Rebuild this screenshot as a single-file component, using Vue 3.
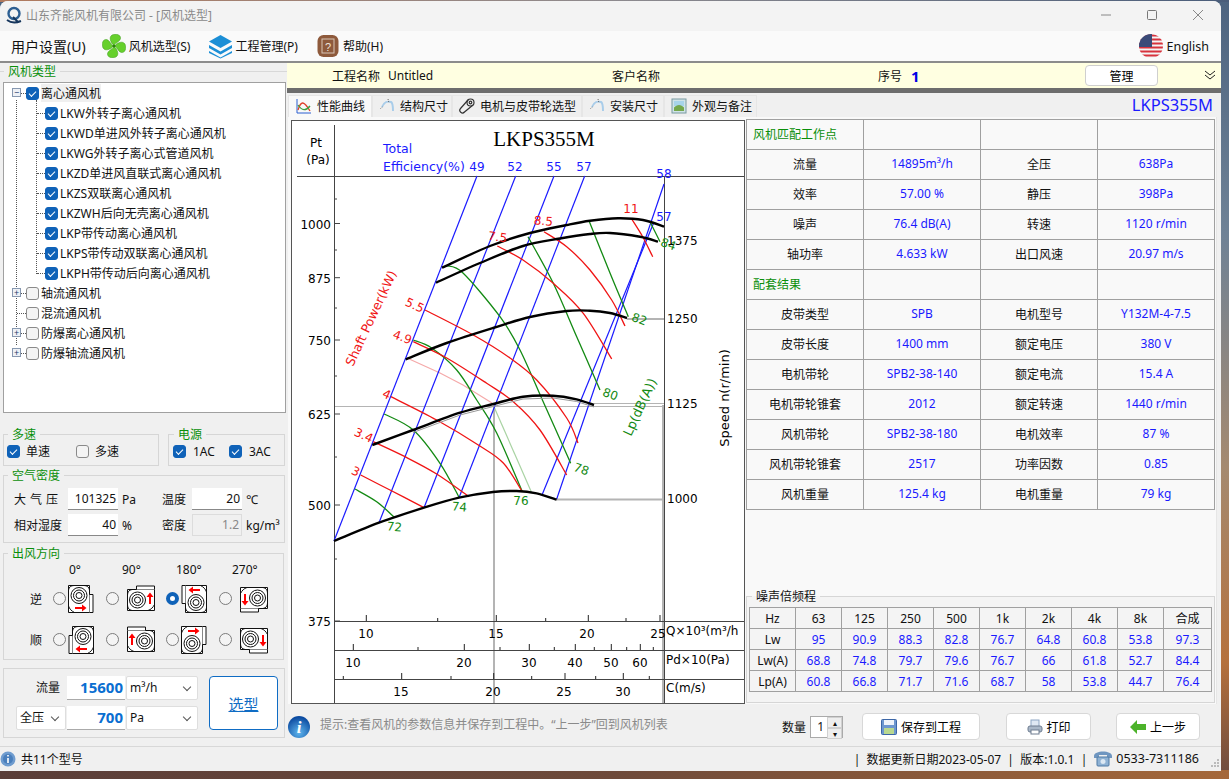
<script setup>
const treeChildren = [
  'LKW外转子离心通风机', 'LKWD单进风外转子离心通风机', 'LKWG外转子离心式管道风机',
  'LKZD单进风直联式离心通风机', 'LKZS双联离心通风机', 'LKZWH后向无壳离心通风机',
  'LKP带传动离心通风机', 'LKPS带传动双联离心通风机', 'LKPH带传动后向离心通风机',
]
const treeRoots = [
  { name: '轴流通风机', expand: true },
  { name: '混流通风机', expand: false },
  { name: '防爆离心通风机', expand: true },
  { name: '防爆轴流通风机', expand: true },
]

const angles = ['0°', '90°', '180°', '270°']
const dirRows = [
  { label: '逆', mirror: 1, selected: 2 },
  { label: '顺', mirror: -1, selected: -1 },
]
const fanTransform = (mirror, i) => `translate(14 14) scale(${mirror} 1) rotate(${-90 * i}) translate(-14 -14)`
// the outlet stub makes the icon off-centre, so the space after the radio differs per cell
const fanGap = (mirror, i) => {
  if (i % 2) return 'gap8'
  return (mirror === 1) === (i === 0) ? 'gap0' : 'gap2'
}

const tabs = [
  { name: '性能曲线', icon: 'curve', w: 84 },
  { name: '结构尺寸', icon: 'size', w: 80 },
  { name: '电机与皮带轮选型', icon: 'pin', w: 130 },
  { name: '安装尺寸', icon: 'size', w: 82 },
  { name: '外观与备注', icon: 'pic', w: 93 },
]

const specRows = [
  { head: '风机匹配工作点' },
  { a: '流量', b: '14895m³/h', c: '全压', d: '638Pa' },
  { a: '效率', b: '57.00 %', c: '静压', d: '398Pa' },
  { a: '噪声', b: '76.4 dB(A)', c: '转速', d: '1120 r/min' },
  { a: '轴功率', b: '4.633 kW', c: '出口风速', d: '20.97 m/s' },
  { head: '配套结果' },
  { a: '皮带类型', b: 'SPB', c: '电机型号', d: 'Y132M-4-7.5' },
  { a: '皮带长度', b: '1400 mm', c: '额定电压', d: '380 V' },
  { a: '电机带轮', b: 'SPB2-38-140', c: '额定电流', d: '15.4 A' },
  { a: '电机带轮锥套', b: '2012', c: '额定转速', d: '1440 r/min' },
  { a: '风机带轮', b: 'SPB2-38-180', c: '电机效率', d: '87 %' },
  { a: '风机带轮锥套', b: '2517', c: '功率因数', d: '0.85' },
  { a: '风机重量', b: '125.4 kg', c: '电机重量', d: '79 kg' },
]

const noiseHead = ['Hz', '63', '125', '250', '500', '1k', '2k', '4k', '8k', '合成']
const noiseRows = [
  ['Lw', '95', '90.9', '88.3', '82.8', '76.7', '64.8', '60.8', '53.8', '97.3'],
  ['Lw(A)', '68.8', '74.8', '79.7', '79.6', '76.7', '66', '61.8', '52.7', '84.4'],
  ['Lp(A)', '60.8', '66.8', '71.7', '71.6', '68.7', '58', '53.8', '44.7', '76.4'],
]

// catmull-rom through the points read off the fan chart
function smooth(p) {
  let d = `M${p[0][0]} ${p[0][1]}`
  for (let i = 0; i < p.length - 1; i++) {
    const p0 = p[i - 1] || p[i]
    const p1 = p[i]
    const p2 = p[i + 1]
    const p3 = p[i + 2] || p2
    const c1x = p1[0] + (p2[0] - p0[0]) / 6
    const c1y = p1[1] + (p2[1] - p0[1]) / 6
    const c2x = p2[0] - (p3[0] - p1[0]) / 6
    const c2y = p2[1] - (p3[1] - p1[1]) / 6
    d += ` C${c1x.toFixed(1)} ${c1y.toFixed(1)} ${c2x.toFixed(1)} ${c2y.toFixed(1)} ${p2[0]} ${p2[1]}`
  }
  return d
}

const blackCurves = [
  [[442, 267.7], [490, 246], [530, 233], [566.7, 225], [590, 220.7], [618, 218.3], [643, 220], [664, 226.7]],
  [[436, 282.7], [480, 263], [523, 246], [560, 238.5], [590, 234], [610, 233], [640, 236.7], [658, 241.7]],
  [[405.7, 359.3], [446.7, 343], [493, 328], [530, 317], [566.7, 311], [590, 310.7], [610, 313], [627, 318]],
  [[372.3, 445], [413, 430], [460, 412.7], [493.3, 404], [523, 396.7], [553, 395.7], [576.7, 399.3], [594, 405]],
  [[334, 541], [379, 522.7], [424, 507.7], [459, 497.7], [493, 492], [516.7, 491], [536.7, 493.3], [556.7, 499.7]],
].map(smooth)

const redCurves = [
  [[631.7, 219], [642.7, 236.7], [652.7, 256.7]],
  [[544, 231.7], [566.7, 246.7], [590, 270], [611.7, 300], [625, 326]],
  [[497.3, 246], [523, 260], [553.3, 283.3], [583.3, 313.3], [611.7, 359]],
  [[425, 310], [473.3, 335], [510, 358], [536.7, 380], [566.7, 418], [578, 443]],
  [[413.3, 341.7], [446.7, 358], [486.7, 383.3], [513.3, 401.7], [540, 430], [566.7, 475]],
  [[391, 396.7], [436.7, 420], [478.3, 445], [503.3, 463], [522.3, 491.7]],
  [[373.3, 441.7], [405, 456.7], [436.7, 474], [469, 496.7]],
  [[360.7, 475], [390, 490], [424, 507.7]],
].map(smooth)

const greenCurves = [
  [[650, 221.7], [660, 241.7]],
  [[589, 220.7], [610, 273], [628.3, 316.7]],
  [[528, 236.7], [553.3, 283.3], [576.7, 336.7], [600, 390]],
  [[446.7, 265.7], [463, 273], [500, 316.7], [520, 350], [543.3, 402], [570.7, 463.3]],
  [[413.3, 340], [431.7, 348], [456.7, 370], [476.7, 400], [496.7, 433], [522.3, 491.7]],
  [[384.3, 414], [413.3, 430], [440, 463.3], [459.3, 497.7]],
  [[355, 489], [376.7, 501.7], [394.3, 517.3]],
].map(smooth)

const blueLines = [
  [477, 176, 334, 541], [515.7, 176, 379, 522.7], [554, 176, 424, 507.7], [584.7, 176, 459, 497.7],
  [654, 222, 542, 495], [664, 184, 556.7, 499],
]

const pressureTicks = [
  { y: 223.5, t: '1000' }, { y: 277.7, t: '875' }, { y: 340, t: '750' },
  { y: 414, t: '625' }, { y: 505, t: '500' }, { y: 621, t: '375' },
]
const minorTicks = [199, 250, 308, 376, 457, 559]

const axes = [
  { y: 621, major: [366.3, 496.3, 588.3, 660], minor: [437.7, 545.7, 626] },
  { y: 650, major: [353.3, 464.3, 529.3, 575.3, 611.3, 640.3], minor: [418, 500, 554.3, 594.3, 626.7, 653.3] },
  { y: 679, major: [401.7, 493.7, 565, 623.3], minor: [343.3, 451, 531.7, 595.7, 649.3] },
]

const labels = [
  { t: 'Pt', x: 316, y: 147 }, { t: '(Pa)', x: 318, y: 164 },
  { t: '10', x: 366, y: 638 }, { t: '15', x: 496, y: 638 }, { t: '20', x: 587, y: 638 }, { t: '25', x: 658, y: 638 },
  { t: '10', x: 353, y: 667 }, { t: '20', x: 464, y: 667 }, { t: '30', x: 529, y: 667 },
  { t: '40', x: 575, y: 667 }, { t: '50', x: 611, y: 667 }, { t: '60', x: 640, y: 667 },
  { t: '15', x: 401, y: 696 }, { t: '20', x: 493, y: 696 }, { t: '25', x: 564, y: 696 }, { t: '30', x: 623, y: 696 },
]
const blueLabels = [
  { t: '49', x: 477, y: 170.7 }, { t: '52', x: 515, y: 170.7 }, { t: '55', x: 554, y: 170.7 },
  { t: '57', x: 584, y: 170.7 }, { t: '58', x: 664, y: 178 }, { t: '57', x: 664, y: 221 },
]
const redLabels = [
  { t: '11', x: 631, y: 209, r: 0 }, { t: '8.5', x: 543, y: 221, r: 5 }, { t: '7.5', x: 497, y: 237, r: 8 },
  { t: '5.5', x: 413, y: 305, r: 25 }, { t: '4.9', x: 401, y: 337, r: 20 }, { t: '4', x: 385, y: 394, r: 25 },
  { t: '3.4', x: 362, y: 435, r: 25 }, { t: '3', x: 354, y: 471, r: 25 },
]
const greenLabels = [
  { t: '72', x: 394, y: 527, r: 5 }, { t: '74', x: 459, y: 507, r: 5 }, { t: '76', x: 521, y: 501, r: 0 },
  { t: '78', x: 580, y: 469, r: 20 }, { t: '80', x: 609, y: 394, r: 20 }, { t: '82', x: 638, y: 319, r: 20 },
  { t: '84', x: 667, y: 244, r: 20 },
]
</script>

<template>
  <div class="window">
    <div class="titlebar">
      <svg class="logo" width="20" height="20" viewBox="0 0 20 20">
        <circle cx="10" cy="8.500" r="5.500" fill="none" stroke="#2d5f92" stroke-width="2.400" />
        <path d="M3 15c4 3 9 3 14 1" fill="none" stroke="#16365c" stroke-width="2" />
        <path d="M9 12l5 5" stroke="#16365c" stroke-width="2" />
      </svg>
      <span class="title-text">山东齐能风机有限公司 - [风机选型]</span>
      <div class="win-btns">
        <svg width="12" height="12" viewBox="0 0 12 12"><path d="M1 6h10" stroke="#888" /></svg>
        <svg width="12" height="12" viewBox="0 0 12 12"><rect x="1.500" y="1.500" width="9" height="9" rx="1" fill="none" stroke="#777" /></svg>
        <svg width="12" height="12" viewBox="0 0 12 12"><path d="M1 1l10 10M11 1L1 11" stroke="#888" /></svg>
      </div>
    </div>

    <div class="menubar">
      <span class="menu-main">用户设置(U)</span>
      <span class="menu-item fan">
        <svg width="24" height="24" viewBox="0 0 24 24">
          <g fill="#66d02c" stroke="#3f9a1c" stroke-width=".5">
            <path v-for="r in [0, 90, 180, 270]" :key="r" :transform="`rotate(${r} 12 12)`" d="M12 11.500C8.500 8.500 6.500 3.500 10 1c4-1.500 9-.5 8.500 3.500-.5 3-4 3.500-6.500 7z" />
          </g>
          <circle cx="12" cy="12" r="1.600" fill="#2f7f12" />
        </svg>
        风机选型(S)
      </span>
      <span class="menu-item stack">
        <svg width="25" height="25" viewBox="0 0 25 25">
          <path d="M12.500 1L24 7.500 12.500 14 1 7.500z" fill="#1c8fd6" />
          <path d="M1 11l11.500 6.500L24 11v3l-11.500 6.500L1 14z" fill="#1c8fd6" />
          <path d="M1 17l11.500 6.500L24 17v2l-11.500 5.500L1 19z" fill="#1c8fd6" />
        </svg>
        工程管理(P)
      </span>
      <span class="menu-item help">
        <svg width="22" height="24" viewBox="0 0 22 24">
          <rect x="0.500" y="1" width="21" height="22" rx="6" fill="#8e5a3c" />
          <rect x="5" y="5" width="12" height="14" fill="none" stroke="#d8c5b6" />
          <text x="11" y="16.500" text-anchor="middle" font-size="11" font-family="Liberation Sans" fill="#f0e6dd">?</text>
        </svg>
        帮助(H)
      </span>
      <span class="lang">
        <svg width="24" height="24" viewBox="0 0 24 24">
          <clipPath id="flagClip"><circle cx="12" cy="12" r="12" /></clipPath>
          <g clip-path="url(#flagClip)">
            <rect width="24" height="24" fill="#f4f4f4" />
            <path d="M0 1.500h24M0 5.500h24M0 9.500h24M0 13.500h24M0 17.500h24M0 21.500h24" stroke="#d8323c" stroke-width="2" />
            <rect width="13" height="13" fill="#3a4a78" />
          </g>
        </svg>
        English
      </span>
    </div>

    <div class="main">
      <aside class="left">
        <fieldset class="type-group">
          <legend class="green">风机类型</legend>
          <div class="tree">
            <i class="tree-line root-line"></i>
            <i class="tree-line child-line"></i>
            <div class="row root">
              <i class="expander">−</i>
              <input type="checkbox" checked />
              <span class="picked">离心通风机</span>
            </div>
            <div v-for="c in treeChildren" :key="c" class="row child">
              <input type="checkbox" checked />
              <span>{{ c }}</span>
            </div>
            <div v-for="r in treeRoots" :key="r.name" class="row root">
              <i v-if="r.expand" class="expander">+</i>
              <input type="checkbox" />
              <span>{{ r.name }}</span>
            </div>
          </div>
        </fieldset>

        <div class="two-groups">
          <fieldset class="group speed">
            <legend class="green">多速</legend>
            <label><input type="checkbox" checked />单速</label>
            <label><input type="checkbox" />多速</label>
          </fieldset>
          <fieldset class="group power">
            <legend class="green">电源</legend>
            <label><input type="checkbox" checked />1AC</label>
            <label><input type="checkbox" checked />3AC</label>
          </fieldset>
        </div>

        <fieldset class="group air">
          <legend class="green">空气密度</legend>
          <div class="air-grid">
            <span class="spaced">大气压</span>
            <span class="num-box">101325</span>
            <span class="unit">Pa</span>
            <span>温度</span>
            <span class="num-box">20</span>
            <span class="unit">℃</span>
            <span>相对湿度</span>
            <span class="num-box">40</span>
            <span class="unit">%</span>
            <span>密度</span>
            <span class="num-box off">1.2</span>
            <span class="unit">kg/m³</span>
          </div>
        </fieldset>

        <fieldset class="group outlet">
          <legend class="green">出风方向</legend>
          <div class="dir-head">
            <span v-for="a in angles" :key="a">{{ a }}</span>
          </div>
          <div v-for="row in dirRows" :key="row.label" class="dir-row">
            <span class="dir-label">{{ row.label }}</span>
            <div v-for="(a, i) in angles" :key="a" class="dir-cell">
              <input type="radio" :checked="row.selected === i" />
              <svg :class="fanGap(row.mirror, i)" width="28" height="28" viewBox="0 0 28 28">
                <g :transform="fanTransform(row.mirror, i)">
                  <path d="M2.500.5h21v27h-21z" fill="#fff" stroke="#111" />
                  <path d="M23.500 9.500h3.500v18h-3.500" fill="#fff" stroke="#111" />
                  <path d="M2.500 5C3 2 5 .5 8 .5M23.500 5C23 2 21 .5 18 .5M2.500 21c1 3 3 5 6 6.500" fill="none" stroke="#111" />
                  <circle cx="13" cy="10.500" r="8" fill="none" stroke="#111" />
                  <circle cx="13" cy="10.500" r="5.500" fill="none" stroke="#111" />
                  <circle cx="13" cy="10.500" r="3" fill="none" stroke="#111" />
                  <path d="M9 23h7v-2.500l4.500 3.500-4.500 3.500V25H9z" fill="#f00" transform="translate(0 -1)" />
                </g>
              </svg>
            </div>
          </div>
        </fieldset>

        <div class="select-box">
          <div class="select-grid">
            <span class="flow-label">流量</span>
            <span class="big-num">15600</span>
            <span class="combo">m³/h<i class="caret"></i></span>
            <span class="combo">全压<i class="caret"></i></span>
            <span class="big-num">700</span>
            <span class="combo">Pa<i class="caret"></i></span>
          </div>
          <button class="pick-btn">选型</button>
        </div>
      </aside>

      <section class="right">
        <div class="project">
          <span class="pj-a">工程名称</span>
          <span class="pj-b">Untitled</span>
          <span class="pj-c">客户名称</span>
          <span class="pj-d">序号</span>
          <b class="pj-e">1</b>
          <button class="manage">管理</button>
          <svg class="chev" width="12" height="11" viewBox="0 0 12 11"><path d="M1 1l5 4 5-4M1 5l5 4 5-4" fill="none" stroke="#222" /></svg>
        </div>
        <div class="darkbar"></div>

        <div class="tabbar">
          <div v-for="(t, i) in tabs" :key="t.name" class="tab" :class="{ active: i === 0 }" :style="{ width: t.w + 'px' }">
            <svg width="16" height="16" viewBox="0 0 16 16">
              <template v-if="t.icon === 'curve'">
                <path d="M1 1v14h14" fill="none" stroke="#2a5fd0" />
                <path d="M2 12C5 2 8 3 14 13" fill="none" stroke="#e0402a" stroke-width="1.300" />
                <path d="M2 7c4 6 8 6 12 1" fill="none" stroke="#3aa040" stroke-width="1.300" />
              </template>
              <template v-else-if="t.icon === 'size'">
                <path d="M3 9C5 4 9 3 12 4c2 1 2 6 2 9" fill="none" stroke="#a9cdea" stroke-width="2" />
                <path d="M1.500 10.500l2-1.500M9 1l1 4" stroke="#666" stroke-dasharray="1 1" />
              </template>
              <template v-else-if="t.icon === 'pin'">
                <g fill="none" stroke="#333" stroke-width="1.200">
                  <circle cx="11.500" cy="4.500" r="3.500" />
                  <circle cx="11.500" cy="4.500" r="1.300" />
                  <path d="M9 2L1.500 10.500a2.500 2.500 0 0 0 4 3.500L14 7" />
                </g>
              </template>
              <template v-else>
                <rect x="1" y="1" width="14" height="14" fill="#cfe3e8" stroke="#7a9aa0" />
                <rect x="3" y="3" width="10" height="5" fill="#a7d4ea" />
                <path d="M3 13V9.500C6 6 10 6 13 9.500V13z" fill="#74a84c" />
              </template>
            </svg>
            <span>{{ t.name }}</span>
          </div>
          <span class="model-name">LKPS355M</span>
        </div>

        <div class="panel">
          <svg class="chart" width="454" height="584" viewBox="291 120 454 584" font-family="DejaVu Sans" font-size="12">
            <rect x="291.500" y="120.500" width="453" height="583" fill="#fff" stroke="#555" />

            <!-- gray guide lines for the working point -->
            <g fill="none" stroke="#b4b4b4">
              <path d="M334 406.500H664M594 403.500H664" />
              <path d="M627 319H664M557 499.500H664" stroke-width="2" />
              <path d="M494 404V703" stroke-width="2" />
              <path d="M663 405V703" stroke-width="2" />
            </g>
            <path d="M407 358L440 373 463 385 492 403" fill="none" stroke="#f5a9a9" stroke-width="1.200" />
            <path d="M494 406.700L531.700 492.700" stroke="#a9d3a3" stroke-width="1.200" />

            <g stroke="#444" fill="none">
              <path d="M334.500 125V703M664.500 176V703M297 176.500H744" />
              <path v-for="a in axes" :key="a.y" :d="`M334 ${a.y}.5H744`" />
              <path v-for="t in pressureTicks" :key="t.y" :d="`M334 ${t.y}h6`" />
              <path v-for="y in minorTicks" :key="y" :d="`M334 ${y}h3`" />
            </g>
            <g v-for="a in axes" :key="'t' + a.y" stroke="#222">
              <line v-for="x in a.major" :key="x" :x1="x" :x2="x" :y1="a.y" :y2="a.y - 6" />
              <line v-for="x in a.minor" :key="x" :x1="x" :x2="x" :y1="a.y" :y2="a.y - 3" />
            </g>

            <line v-for="(b, i) in blueLines" :key="i" :x1="b[0]" :y1="b[1]" :x2="b[2]" :y2="b[3]" stroke="#1a1aff" stroke-width="1.200" />
            <path v-for="(d, i) in greenCurves" :key="i" :d="d" fill="none" stroke="#138a13" stroke-width="1.300" />
            <path v-for="(d, i) in redCurves" :key="i" :d="d" fill="none" stroke="#f01414" stroke-width="1.300" />
            <path d="M413 432.500L460 415 493.300 406.500 523 399 553 398 576.700 401.500 594 407" fill="none" stroke="#999" stroke-width="1" />
            <path v-for="(d, i) in blackCurves" :key="i" :d="d" fill="none" stroke="#000" stroke-width="2.400" />

            <text x="544" y="146" text-anchor="middle" font-family="Liberation Serif" font-size="21">LKPS355M</text>
            <text x="383" y="153" fill="#1a1aff" font-size="12.500">Total</text>
            <text x="383" y="170.700" fill="#1a1aff" font-size="12.500">Efficiency(%)</text>

            <text v-for="t in pressureTicks" :key="t.t" x="331" :y="t.y + 5" text-anchor="end">{{ t.t }}</text>
            <text v-for="l in labels" :key="l.t + l.x + l.y" :x="l.x" :y="l.y" text-anchor="middle">{{ l.t }}</text>
            <text v-for="l in blueLabels" :key="l.t + l.y" :x="l.x" :y="l.y" text-anchor="middle" fill="#1a1aff">{{ l.t }}</text>
            <text v-for="l in redLabels" :key="l.t" text-anchor="middle" fill="#f01414" :transform="`translate(${l.x} ${l.y + 4}) rotate(${l.r})`">{{ l.t }}</text>
            <text v-for="l in greenLabels" :key="l.t" text-anchor="middle" fill="#138a13" :transform="`translate(${l.x} ${l.y + 4}) rotate(${l.r})`">{{ l.t }}</text>

            <text x="667" y="245">1375</text>
            <text x="667" y="323">1250</text>
            <text x="667" y="408">1125</text>
            <text x="667" y="503">1000</text>
            <text x="666" y="635">Q×10³(m³/h</text>
            <text x="666" y="664">Pd×10(Pa)</text>
            <text x="666" y="692">C(m/s)</text>

            <text transform="translate(375 320) rotate(-65)" text-anchor="middle" fill="#f01414" font-size="12.500">Shaft Power(kW)</text>
            <text transform="translate(644 409) rotate(-65)" text-anchor="middle" fill="#138a13" font-size="13">Lp(dB(A))</text>
            <text transform="translate(729 398) rotate(-90)" text-anchor="middle" font-size="13">Speed n(r/min)</text>
          </svg>

          <div class="info-col">
            <div class="spec">
              <template v-for="(r, i) in specRows" :key="i">
                <template v-if="r.head">
                  <div class="cell head">{{ r.head }}</div>
                  <div class="cell"></div>
                  <div class="cell"></div>
                  <div class="cell"></div>
                </template>
                <template v-else>
                  <div class="cell">{{ r.a }}</div>
                  <div class="cell val">{{ r.b }}</div>
                  <div class="cell">{{ r.c }}</div>
                  <div class="cell val">{{ r.d }}</div>
                </template>
              </template>
            </div>

            <fieldset class="group noise">
              <legend>噪声倍频程</legend>
              <div class="noise-grid">
                <div v-for="h in noiseHead" :key="h" class="n-cell">{{ h }}</div>
                <template v-for="row in noiseRows" :key="row[0]">
                  <div v-for="(v, i) in row" :key="i" class="n-cell" :class="{ val: i > 0 }">{{ v }}</div>
                </template>
              </div>
            </fieldset>
          </div>
        </div>

        <div class="bottombar">
          <svg width="24" height="24" viewBox="0 0 24 24">
            <defs>
              <radialGradient id="infoBlue" cx="50%" cy="75%" r="70%">
                <stop offset="0" stop-color="#5fb6ee" />
                <stop offset="1" stop-color="#0b4aa0" />
              </radialGradient>
            </defs>
            <circle cx="12" cy="12" r="11" fill="url(#infoBlue)" />
            <text x="12" y="18" text-anchor="middle" font-family="Liberation Serif" font-style="italic" font-weight="700" font-size="17" fill="#fff">i</text>
          </svg>
          <span class="hint">提示:查看风机的参数信息并保存到工程中。“上一步”回到风机列表</span>
          <span class="qty-label">数量</span>
          <div class="spinner">
            <span>1</span>
            <div class="spin-btns"><i>▴</i><i>▾</i></div>
          </div>
          <button class="act save">
            <svg width="16" height="16" viewBox="0 0 16 16">
              <rect x="0.500" y="0.500" width="15" height="15" rx="1" fill="#6d97cf" stroke="#3c66a6" />
              <rect x="3" y="1" width="10" height="5" fill="#eef3fa" />
              <rect x="3" y="9" width="10" height="6" fill="#b9d88f" />
            </svg>
            保存到工程
          </button>
          <button class="act print">
            <svg width="16" height="16" viewBox="0 0 16 16">
              <rect x="4" y="1" width="8" height="7" fill="#dfe8f4" stroke="#8ea6c4" />
              <rect x="1" y="7" width="14" height="6" rx="2" fill="#a9b7c8" stroke="#6e7d90" />
              <rect x="4" y="11" width="8" height="4" fill="#fff" stroke="#6e7d90" />
            </svg>
            打印
          </button>
          <button class="act back">
            <svg width="16" height="14" viewBox="0 0 16 14"><path d="M0 7l7-7v4h9v6H7v4z" fill="#4cb32a" /></svg>
            上一步
          </button>
        </div>
      </section>
    </div>

    <footer class="status">
      <svg width="16" height="16" viewBox="0 0 16 16">
        <circle cx="8" cy="8" r="7.500" fill="#6f9ccf" />
        <circle cx="8" cy="8" r="5" fill="#4a7fbc" />
        <path d="M8 4v1.500M8 7v5" stroke="#fff" stroke-width="1.600" />
      </svg>
      <span class="count">共11个型号</span>
      <span class="stat-right">|&nbsp;&nbsp;数据更新日期2023-05-07&nbsp;&nbsp;|&nbsp;&nbsp;版本:1.0.1&nbsp;&nbsp;|</span>
      <svg class="phone" width="20" height="17" viewBox="0 0 20 17">
        <path d="M1 6c0-6 18-6 18 0v2h-5V5H6v3H1z" fill="#6f96c0" />
        <rect x="4" y="7" width="12" height="9" rx="1" fill="#8fb2d4" stroke="#4f7aa5" />
        <circle cx="10" cy="11.500" r="2.500" fill="#dce8f3" />
      </svg>
      <span class="tel">0533-7311186</span>
      <svg class="grip" width="8" height="8" viewBox="0 0 8 8">
        <path d="M6 0h2v2H6zM3 3h2v2H3zM6 3h2v2H6zM0 6h2v2H0zM3 6h2v2H3zM6 6h2v2H6z" fill="#bbb" />
      </svg>
    </footer>
  </div>
</template>

<style>
html, body {
  margin: 0;
  height: 779px;
  overflow: hidden;
}
body {
  background:
    linear-gradient(90deg, #b07a5e, #8d8a8e 50%, #4a5d7a) 0 0 / 100% 2px no-repeat,
    linear-gradient(90deg, #5a3d38, #6e4a3a 50%, #a5683a) 0 100% / 100% 9px no-repeat,
    linear-gradient(180deg, #4d6480 0%, #6f8296 30%, #a58a70 60%, #b5713c 85%, #6c4a3e 100%);
}
</style>

<style scoped>
.window {
  width: 1221px;
  height: 770px;
  margin-top: 1px;
  background: #f0f0f0;
  border-radius: 8px 8px 0 0;
  overflow: hidden;
  display: flex;
  flex-direction: column;
  font-family: "Noto Sans", "Noto Sans CJK SC", sans-serif;
  font-size: 12px;
  color: #111;
}
.titlebar {
  box-sizing: border-box;
  height: 30px;
  flex: none;
  background: #f3f3f3;
  display: flex;
  align-items: center;
  padding: 0 0 2px 4px;
  font-size: 12px;
  color: #8a8a8a;
}
.title-text { margin-left: 2px; }
.win-btns {
  margin-left: auto;
  display: flex;
  gap: 34px;
  padding-right: 17px;
}
.menubar {
  height: 30px;
  flex: none;
  background: #fafafa;
  border-bottom: 2px solid #8c8c8c;
  display: flex;
  align-items: center;
}
.menu-main {
  font-size: 14px;
  margin-left: 11px;
}
.menu-item {
  display: flex;
  align-items: center;
  gap: 2px;
}
.fan { margin-left: 16px; gap: 3px; }
.stack { margin-left: 18px; }
.help { margin-left: 19px; gap: 4px; }
.lang {
  margin-left: auto;
  margin-right: 12px;
  display: flex;
  align-items: center;
  gap: 3px;
  font-size: 12.500px;
}

.main {
  height: 683px;
  flex: none;
  display: flex;
}
.left {
  width: 287px;
  flex: none;
}
.green { color: #0a8f0a; }
fieldset {
  margin: 0;
  min-width: 0;
  box-sizing: border-box;
}
legend {
  padding: 0 4px;
  line-height: 18px;
  height: 16px;
}
.type-group {
  height: 351px;
  padding: 3px 0 0 3px;
  border: 0;
  border-top: 1px solid #d8d8d8;
}
.type-group legend { margin-left: 1px; }
.tree {
  position: relative;
  box-sizing: border-box;
  width: 283px;
  height: 331px;
  border: 1px solid #a0a0a0;
  background: #fff;
}
.tree-line {
  position: absolute;
  width: 0;
  border-left: 1px dotted #555;
}
.root-line { left: 12px; top: 17px; height: 245px; }
.child-line { left: 32px; top: 17px; height: 174px; }
.row {
  position: relative;
  height: 20px;
  display: flex;
  align-items: center;
  gap: 2px;
  white-space: nowrap;
}
.root { padding-left: 22px; }
.child { padding-left: 41px; }
.row::before {
  content: "";
  position: absolute;
  height: 0;
  border-top: 1px dotted #555;
  top: 10px;
}
.root::before { left: 13px; width: 9px; }
.child::before { left: 33px; width: 8px; }
.picked { background: #f0f0f0; }
.expander {
  position: absolute;
  left: 8px;
  top: 5px;
  z-index: 1;
  width: 9px;
  height: 9px;
  box-sizing: border-box;
  border: 1px solid #8798b0;
  background: #eef1f6;
  color: #233a6b;
  font-style: normal;
  font-size: 9px;
  line-height: 7px;
  text-align: center;
}
input[type="checkbox"] {
  appearance: none;
  position: relative;
  flex: none;
  width: 13px;
  height: 13px;
  margin: 0;
  box-sizing: border-box;
  border: 1px solid #8a8a8a;
  border-radius: 3px;
  background: #f4f4f4;
}
input[type="checkbox"]:checked {
  border-color: #0f62b8;
  background: #0f62b8;
}
input[type="checkbox"]:checked::after {
  content: "";
  position: absolute;
  left: 2px;
  top: 3px;
  width: 6px;
  height: 3px;
  border-left: 1px solid #fff;
  border-bottom: 1px solid #fff;
  transform: rotate(-45deg);
}
input[type="radio"] {
  appearance: none;
  flex: none;
  width: 13px;
  height: 13px;
  margin: 0;
  box-sizing: border-box;
  border: 1px solid #7c7c7c;
  border-radius: 50%;
  background: #f4f4f4;
}
input[type="radio"]:checked {
  border: 4px solid #0f62b8;
  background: #fff;
}

.group {
  border: 1px solid #d6d6d6;
  padding: 0;
}
.group legend { margin-left: 4px; }
.two-groups {
  display: flex;
  gap: 9px;
  margin: 12px 0 0 3px;
}
.speed, .power {
  height: 40px;
  display: flex;
  align-items: center;
}
.speed legend, .power legend { margin-left: 1px; }
.speed { width: 156px; padding-left: 3px; gap: 20px; }
.power { width: 117px; padding-left: 4px; gap: 14px; }
.speed label, .power label {
  display: flex;
  align-items: center;
  gap: 6px;
  margin-top: -5px;
}
.power label { gap: 7px; }
.speed label:first-of-type { margin-right: 6px; }
.air {
  width: 282px;
  height: 76px;
  margin: 1px 0 0 3px;
}
.air-grid {
  display: grid;
  grid-template-columns: 54px 50px 44px 30px 50px auto;
  grid-auto-rows: 26px;
  align-items: center;
  padding: 3px 0 0 10px;
}
.spaced { letter-spacing: 4px; }
.num-box {
  box-sizing: border-box;
  height: 22px;
  line-height: 21px;
  background: #fff;
  border-bottom: 1px solid #888;
  text-align: right;
  padding-right: 2px;
}
.num-box.off {
  background: #f0f0f0;
  border: 1px solid #dcdcdc;
  color: #888;
  line-height: 19px;
}
.unit { padding-left: 4px; }
.outlet {
  width: 281px;
  height: 115px;
  margin: 2px 0 0 3px;
}
.dir-head {
  display: grid;
  grid-template-columns: 53px 54px 56px 56px;
  padding-left: 65px;
  line-height: 16px;
  margin-top: 1px;
}
.dir-row {
  display: grid;
  grid-template-columns: 23px 53px 60px 53px 60px;
  align-items: center;
  height: 41px;
  padding-left: 26px;
}
.dir-label { font-size: 12px; }
.dir-cell {
  display: flex;
  align-items: center;
}
.gap0 { margin-left: 0; }
.gap2 { margin-left: 2px; }
.gap8 { margin-left: 8px; }
.select-box {
  box-sizing: border-box;
  width: 282px;
  height: 70px;
  margin: 8px 0 0 3px;
  border: 1px solid #d6d6d6;
  display: flex;
  align-items: center;
  padding-left: 12px;
}
.select-grid {
  display: grid;
  grid-template-columns: 50px 58px 72px;
  grid-auto-rows: 24px;
  column-gap: 1px;
  row-gap: 6px;
  align-items: stretch;
}
.flow-label {
  text-align: right;
  padding-right: 6px;
  line-height: 23px;
}
.big-num {
  background: #fff;
  border-bottom: 1px solid #aaa;
  color: #0a6ed1;
  font-weight: 700;
  font-size: 15px;
  text-align: right;
  line-height: 23px;
  padding-right: 2px;
}
.combo {
  position: relative;
  background: #fff;
  border: 1px solid #dedede;
  border-radius: 2px;
  line-height: 22px;
  padding-left: 3px;
}
.caret {
  position: absolute;
  right: 7px;
  top: 7px;
  width: 5px;
  height: 5px;
  border-right: 1px solid #555;
  border-bottom: 1px solid #555;
  transform: rotate(45deg);
}
.pick-btn {
  width: 69px;
  height: 54px;
  margin-left: 11px;
  background: #fff;
  border: 1px solid #0f6cc4;
  border-radius: 4px;
  color: #0f6cc4;
  font: inherit;
  font-size: 15px;
  text-decoration: underline;
}

.right {
  flex: 1;
  min-width: 0;
  display: flex;
  flex-direction: column;
}
.project {
  height: 25px;
  flex: none;
  background: #ffffe1;
  display: grid;
  grid-template-columns: 56px 224px 266px 33px 174px 73px auto;
  align-items: center;
  padding-left: 45px;
  font-size: 12px;
}
.pj-e {
  color: #0000e6;
  font-size: 15px;
}
.manage {
  height: 21px;
  background: #fff;
  border: 1px solid #cfcfcf;
  border-radius: 4px;
  font: inherit;
  padding: 0;
}
.chev { margin-left: 46px; }
.darkbar {
  height: 5px;
  flex: none;
  background: #6d6d6d;
}
.tabbar {
  height: 22px;
  flex: none;
  margin-top: 2px;
  padding-left: 1px;
  display: flex;
  align-items: stretch;
}
.tab {
  box-sizing: border-box;
  display: flex;
  align-items: center;
  gap: 5px;
  padding: 0 0 2px 6px;
  background: #efefef;
  border: 1px solid #e6e6e6;
  border-bottom: 0;
  white-space: nowrap;
}
.tab.active {
  background: #f9f9f9;
  padding-left: 7px;
}
.model-name {
  margin-left: auto;
  margin-right: 8px;
  color: #1a1aff;
  font-size: 16.500px;
  line-height: 19px;
}
.panel {
  height: 587px;
  flex: none;
  margin-left: 1px;
  width: 929px;
  box-sizing: border-box;
  background: #f9f9f9;
  border-right: 1px solid #e6e6e6;
  display: flex;
  gap: 1px;
  padding: 2px 0 0 3px;
}
.chart {
  flex: none;
  margin-top: 1px;
  display: block;
}
.info-col {
  width: 469px;
  height: 584px;
  display: flex;
  flex-direction: column;
  justify-content: space-between;
}
.spec {
  display: grid;
  grid-template-columns: repeat(4, 117px);
  grid-auto-rows: 30px;
  width: 469px;
  border-top: 1px solid #a0a0a0;
  border-left: 1px solid #a0a0a0;
  box-sizing: border-box;
}
.cell {
  box-sizing: border-box;
  border-right: 1px solid #a0a0a0;
  border-bottom: 1px solid #a0a0a0;
  display: flex;
  align-items: center;
  justify-content: center;
  padding-bottom: 2px;
}
.cell.head {
  justify-content: flex-start;
  padding-left: 6px;
  color: #0a8f0a;
}
.val { color: #1a1aff; }
.noise {
  height: 115px;
  width: 469px;
  margin-bottom: 0;
  background: #f4f4f4;
}
.noise legend { margin-left: 5px; }
.noise-grid {
  display: grid;
  grid-template-columns: repeat(9, 46px) 48px;
  grid-auto-rows: 21px;
  width: 463px;
  box-sizing: border-box;
  margin: 3px 0 0 2px;
  border-top: 1px solid #a0a0a0;
  border-left: 1px solid #a0a0a0;
}
.n-cell {
  box-sizing: border-box;
  border-right: 1px solid #a0a0a0;
  border-bottom: 1px solid #a0a0a0;
  display: flex;
  align-items: center;
  justify-content: center;
}
.bottombar {
  flex: 1;
  display: flex;
  align-items: center;
  padding-top: 3px;
}
.hint {
  color: #8a8a8a;
  margin: 0 0 6px 9px;
  width: 460px;
}
.qty-label { margin-left: 2px; }
.spinner {
  box-sizing: border-box;
  width: 33px;
  height: 22px;
  margin-left: 4px;
  border: 1px solid #aaa;
  background: #fff;
  display: flex;
  align-items: center;
  justify-content: flex-end;
  gap: 3px;
}
.spin-btns {
  width: 15px;
  height: 20px;
  display: flex;
  flex-direction: column;
  font-size: 8px;
  line-height: 9px;
  text-align: center;
}
.spin-btns i {
  flex: 1;
  font-style: normal;
  background: #eee;
  border: 1px solid #d0d0d0;
  box-sizing: border-box;
}
.act {
  height: 27px;
  box-sizing: border-box;
  background: #fff;
  border: 1px solid #d8d8d8;
  border-radius: 4px;
  font: inherit;
  display: flex;
  align-items: center;
  justify-content: center;
  gap: 4px;
  padding: 0;
}
.save { width: 118px; margin-left: 19px; }
.print { width: 85px; margin-left: 26px; }
.back { width: 84px; margin-left: 25px; }
.status {
  height: 24px;
  flex: none;
  box-sizing: border-box;
  border-top: 1px solid #d8d8d8;
  display: flex;
  align-items: center;
  padding: 0 2px 0 0;
}
.count { margin-left: 5px; }
.stat-right { margin-left: auto; }
.phone { margin: 0 3px 0 6px; }
.tel { font-size: 12.500px; }
.grip { margin: 8px 0 0 12px; }
</style>
